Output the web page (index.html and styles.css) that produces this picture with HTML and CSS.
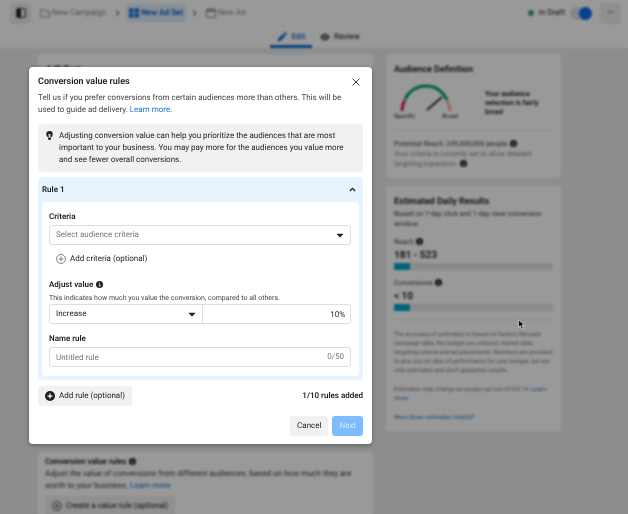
FILE: index.html
```
<!DOCTYPE html>
<html lang="en">

<head>
    <meta charset="utf-8">
    <title>Conversion value rules</title>
    <link rel="stylesheet" href="styles.css">
</head>

<body>

    <svg class="sprite" aria-hidden="true">
        <symbol id="info" viewBox="0 0 14 14">
            <circle cx="7" cy="7" r="7" fill="currentColor" />
            <path d="M5.5 6h2.3v4M5.3 10.3h3.6M7 3v1.6" stroke="#fff" stroke-width="1.6" fill="none" />
        </symbol>
        <symbol id="plus-circle" viewBox="0 0 20 20">
            <circle cx="10" cy="10" r="9" fill="none" stroke="currentColor" stroke-width="1.6" />
            <path d="M10 5v10M5 10h10" stroke="currentColor" stroke-width="1.6" />
        </symbol>
        <symbol id="chevron" viewBox="0 0 8 12">
            <path d="M2 2l4 4-4 4" fill="none" stroke="currentColor" stroke-width="2" />
        </symbol>
        <symbol id="caret" viewBox="0 0 12 8">
            <path d="M1.5 1h9q1 0 .4.8L6.8 6.4q-.8.8-1.6 0L1.1 1.8Q.5 1 1.5 1z" fill="currentColor" />
        </symbol>
    </svg>

    <div class="page">
        <header class="topbar">
            <div class="topbar-row">
                <button class="square-btn" type="button" aria-label="Toggle panel">
                    <svg class="icon" viewBox="0 0 18 18"><rect x="1" y="1" width="16" height="16" rx="3" fill="none" stroke="#333" stroke-width="2" /><path d="M2 1h7v16H2z" fill="#222" /></svg>
                </button>
                <nav class="crumbs">
                    <a class="crumb" href="#">
                        <svg class="icon" viewBox="0 0 20 18"><path d="M1 3q0-1 1-1h5l2 3h9q1 0 1 1v10q0 1-1 1H2q-1 0-1-1z" fill="none" stroke="currentColor" stroke-width="2" /></svg>
                        New Campaign
                    </a>
                    <svg class="crumb-sep"><use href="#chevron" /></svg>
                    <a class="crumb crumb-active" href="#">
                        <svg class="icon" viewBox="0 0 18 18"><path d="M0 1h8v7H0zM10 1h8v7h-8zM0 10h8v7H0zM10 10h8v7h-8z" fill="currentColor" /></svg>
                        New Ad Set
                    </a>
                    <svg class="crumb-sep"><use href="#chevron" /></svg>
                    <a class="crumb" href="#">
                        <svg class="icon" viewBox="0 0 18 18"><rect x="1" y="2" width="16" height="15" rx="2" fill="none" stroke="currentColor" stroke-width="2" /><path d="M1 4h16v3H1z" fill="currentColor" /></svg>
                        New Ad
                    </a>
                </nav>
                <div class="status">
                    <span class="status-dot"></span>
                    <label for="live">In Draft</label>
                    <input class="toggle" id="live" type="checkbox" checked>
                    <button class="square-btn" type="button" aria-label="More">•••</button>
                </div>
            </div>
            <nav class="tabs">
                <a class="tab tab-active" href="#">
                    <svg class="icon" viewBox="0 0 18 18"><path d="M1 17l1-5L11 3l4 4-9 9zM12 2l1.500-1.500q1-1 2 0l2 2q1 1 0 2L16 6z" fill="currentColor" /></svg>
                    Edit
                </a>
                <a class="tab" href="#">
                    <svg class="icon" viewBox="0 0 20 16"><path d="M0 8q10-14 20 0Q10 22 0 8z" fill="currentColor" /><circle cx="10" cy="8" r="3" fill="none" stroke="#fff" stroke-width="1.500" /></svg>
                    Review
                </a>
            </nav>
        </header>

        <main class="columns">
            <div class="column">
                <section class="card card-test">
                    <h2>A/B Test</h2>
                </section>
                <section class="card card-rules">
                    <h3>Conversion value rules <svg class="info"><use href="#info" /></svg></h3>
                    <p>Adjust the value of conversions from different audiences, based on how much they are worth to your business. <a href="#">Learn more</a></p>
                    <button class="btn btn-grey" type="button"><svg class="plus"><use href="#plus-circle" /></svg>Create a value rule (optional)</button>
                </section>
            </div>

            <aside class="column">
                <section class="card">
                    <h2>Audience Definition</h2>
                    <div class="gauge-row">
                        <div class="gauge">
                            <svg viewBox="0 0 54 30">
                                <g fill="none" stroke-width="3">
                                    <path d="M3 29q0-6 3-11" stroke="#e41e4f" />
                                    <path d="M6 17Q13 4 27 4t21 14" stroke="#00a35c" />
                                    <path d="M48 19q3 4 3 10" stroke="#ffb3a0" />
                                    <path d="M28 28l15-13" stroke="#333" stroke-width="2" />
                                </g>
                            </svg>
                            <div class="gauge-ends"><span>Specific</span><span>Broad</span></div>
                        </div>
                        <strong>Your audience selection is fairly broad</strong>
                    </div>
                    <div class="reach">
                        <p class="label">Potential Reach: 249,000,000 people <svg class="info"><use href="#info" /></svg></p>
                        <p class="faint">Your criteria is currently set to allow detailed targeting expansion. <svg class="info"><use href="#info" /></svg></p>
                    </div>
                </section>

                <section class="card card-results">
                    <h2>Estimated Daily Results</h2>
                    <p class="label">Based on 7-day click and 1-day view conversion window</p>
                    <div class="metric">
                        <p class="label">Reach <svg class="info"><use href="#info" /></svg></p>
                        <strong>181 - 523</strong>
                        <div class="bar"><span></span></div>
                    </div>
                    <div class="metric">
                        <p class="label">Conversions <svg class="info"><use href="#info" /></svg></p>
                        <strong>&lt; 10</strong>
                        <div class="bar"><span></span></div>
                    </div>
                    <div class="notes">
                        <p>The accuracy of estimates is based on factors like past campaign data, the budget you entered, market data, targeting criteria and ad placements. Numbers are provided to give you an idea of performance for your budget, but are only estimates and don't guarantee results.</p>
                        <p>Estimates may change as people opt out of iOS 14. <a href="#">Learn more</a></p>
                        <p><a href="#">Were these estimates helpful?</a></p>
                    </div>
                </section>
            </aside>
        </main>
    </div>

    <div class="overlay">
        <form class="modal" role="dialog" aria-labelledby="modal-title">
            <div class="modal-head">
                <h1 id="modal-title">Conversion value rules</h1>
                <button class="close" type="button" aria-label="Close">
                    <svg viewBox="0 0 16 16"><path d="M1 1l14 14M15 1L1 15" stroke="currentColor" stroke-width="2" /></svg>
                </button>
            </div>
            <p class="intro">Tell us if you prefer conversions from certain audiences more than others. This will be used to guide ad delivery. <a href="#">Learn more.</a></p>

            <div class="tip">
                <svg class="bulb" viewBox="0 0 14 18"><path d="M7 0a6.500 6.500 0 0 1 6.500 6.500c0 2.500-1.500 4-2.500 5.500H8.500V8L10 6.500 9 5.500 7 7.500 5 5.500 4 6.500 5.500 8v4H3C2 10.500.5 9 .5 6.500A6.500 6.500 0 0 1 7 0zM4 13h6v2q0 3-3 3t-3-3z" fill="currentColor" /></svg>
                <p>Adjusting conversion value can help you prioritize the audiences that are most important to your business. You may pay more for the audiences you value more and see fewer overall conversions.</p>
            </div>

            <section class="rule">
                <button class="rule-head" type="button" aria-expanded="true">
                    Rule 1
                    <svg viewBox="0 0 12 8"><path d="M1.500 6.500L6 2l4.500 4.500" fill="none" stroke="currentColor" stroke-width="2.200" /></svg>
                </button>
                <div class="rule-body">
                    <label for="criteria">Criteria</label>
                    <div class="field">
                        <select class="empty" id="criteria">
                            <option>Select audience criteria</option>
                        </select>
                        <svg class="caret"><use href="#caret" /></svg>
                    </div>
                    <button class="link-btn" type="button"><svg class="plus"><use href="#plus-circle" /></svg>Add criteria (optional)</button>

                    <label for="direction">Adjust value <svg class="info"><use href="#info" /></svg></label>
                    <p class="hint">This indicates how much you value the conversion, compared to all others.</p>
                    <div class="field split">
                        <div class="split-part">
                            <select id="direction">
                                <option>Increase</option>
                                <option>Decrease</option>
                            </select>
                            <svg class="caret"><use href="#caret" /></svg>
                        </div>
                        <input class="amount" type="text" value="10%" aria-label="Amount">
                    </div>

                    <label for="name">Name rule</label>
                    <div class="field">
                        <input id="name" type="text" placeholder="Untitled rule">
                        <span class="count">0/50</span>
                    </div>
                </div>
            </section>

            <div class="add-row">
                <button class="btn btn-grey" type="button">
                    <svg class="plus" viewBox="0 0 20 20"><circle cx="10" cy="10" r="10" fill="currentColor" /><path d="M10 5v10M5 10h10" stroke="#fff" stroke-width="2.500" /></svg>
                    Add rule (optional)
                </button>
                <strong>1/10 rules added</strong>
            </div>
            <div class="actions">
                <button class="btn btn-grey" type="button">Cancel</button>
                <button class="btn btn-blue" type="submit" disabled>Next</button>
            </div>
        </form>
        <svg class="pointer" viewBox="0 0 12 18"><path d="M1 1v13l3-3 2.500 5.500 2.500-1L6.500 10H11z" fill="#000" stroke="#fff" /></svg>
    </div>

</body>

</html>
```
FILE: styles.css
```
* {
    box-sizing: border-box;
}

body {
    margin: 0;
    height: 100vh;
    overflow: hidden;
    background: #e9ebed;
    color: #1c1e21;
    font-family: Roboto, sans-serif;
    font-size: 8px;
    line-height: 12px;
    text-rendering: geometricPrecision;
}

h1, h2, h3, p {
    margin: 0;
}

h1, h2 {
    font-size: 9px;
    font-weight: 600;
}

h3 {
    font-size: 8px;
    font-weight: 600;
}

a {
    color: #1877d2;
    text-decoration: none;
}

button, input, select {
    font: inherit;
    color: inherit;
    text-rendering: inherit;
}

button {
    border: 0;
    cursor: pointer;
}

strong {
    font-weight: 600;
}

.sprite {
    display: none;
}

.icon {
    width: 10px;
    height: 10px;
}

.info {
    width: 7px;
    height: 7px;
    margin-left: 1px;
    vertical-align: -1px;
}

.plus {
    width: 10px;
    height: 10px;
}

/* page behind the dialog */
.topbar {
    height: 48px;
    padding: 2px 7px 0 10px;
    background: #fff;
}

.topbar-row, .crumbs, .crumb, .status, .tabs, .tab {
    display: flex;
    align-items: center;
}

.topbar-row {
    height: 22px;
    gap: 6px;
}

.square-btn {
    display: flex;
    align-items: center;
    justify-content: center;
    width: 21px;
    height: 21px;
    padding: 0;
    border-radius: 3px;
    background: #eceef1;
    font-size: 6px;
}

.crumbs {
    flex: 1;
    gap: 6px;
}

.crumb {
    gap: 2px;
    padding: 3px;
    border-radius: 3px;
    color: #8a8d91;
}

.crumb-active {
    background: #e0edfb;
    color: #0a6fd8;
    font-weight: 700;
}

.crumb-sep {
    width: 5px;
    height: 8px;
    color: #777;
}

.status {
    gap: 5px;
}

.status-dot {
    width: 6px;
    height: 6px;
    border-radius: 50%;
    background: #31a86b;
}

.toggle {
    display: flex;
    justify-content: flex-end;
    appearance: none;
    width: 22px;
    height: 13px;
    margin: 0 3px 0 0;
    border-radius: 7px;
    background: #d6dfee;
}

.toggle::before {
    content: "";
    width: 13px;
    height: 13px;
    border-radius: 50%;
    background: #0a6fe8;
}

.tabs {
    justify-content: center;
    gap: 1px;
    padding-left: 6px;
}

.tab {
    gap: 4px;
    height: 24px;
    padding: 4px 7px 0;
    border-bottom: 3px solid transparent;
    color: #444;
    font-weight: 500;
}

.tab-active {
    border-color: #0a6fd8;
    color: #0a6fd8;
}

.columns {
    display: grid;
    grid-template-columns: 67fr 35fr;
    gap: 13px;
    padding: 6px 67px 0 38px;
}

.column {
    display: flex;
    flex-direction: column;
    gap: 8px;
    min-width: 0;
}

.card {
    padding: 10px 8px 9px;
    border-radius: 3px;
    background: #fff;
}

.card-test {
    min-height: 390px;
}

.card-rules {
    padding: 4px 7px;
}

.card-rules p {
    margin-bottom: 4px;
    color: #444;
}

.gauge-row {
    display: flex;
    justify-content: space-between;
    margin-top: 6px;
    padding-bottom: 9px;
    border-bottom: 1px solid #e4e6e9;
    font-size: 7px;
    line-height: 9px;
}

.gauge-row strong {
    width: 68px;
    padding-top: 8px;
}

.gauge {
    width: 64px;
}

.gauge svg {
    display: block;
    width: 54px;
    height: 30px;
    margin: 0 auto;
}

.gauge-ends {
    display: flex;
    justify-content: space-between;
    font-size: 6px;
}

.reach {
    padding-top: 8px;
}

.label {
    color: #444;
    font-size: 7px;
    line-height: 10px;
}

.faint {
    color: #8a8d91;
    font-size: 7px;
    line-height: 10px;
}

.label .info, .faint .info {
    color: #1c1e21;
}

.card-results .label {
    margin-top: 1px;
}

.metric {
    margin-top: 8px;
}

.metric strong {
    display: block;
    margin: 3px 0 1px;
    font-size: 10px;
}

.bar {
    height: 7px;
    border-radius: 1px;
    background: #e2e4e8;
}

.bar span {
    display: block;
    width: 10%;
    height: 100%;
    border-radius: 1px;
    background: #00a9c7;
}

.notes {
    margin-top: 8px;
    padding-top: 10px;
    border-top: 1px solid #e4e6e9;
    color: #777;
    font-size: 6px;
    line-height: 9px;
}

.notes p {
    margin-bottom: 10px;
}

.notes p:last-child {
    margin: 0;
}

/* dialog */
.overlay {
    position: fixed;
    inset: 0;
    padding: 67px 29px;
    background: rgba(0, 0, 0, 0.4);
    backdrop-filter: blur(1px);
}

.modal {
    width: 100%;
    max-width: 343px;
    padding: 8px 9px;
    border-radius: 4px;
    background: #fff;
    box-shadow: 0 1px 4px rgba(0, 0, 0, 0.4);
}

.modal-head {
    display: flex;
    align-items: center;
    justify-content: space-between;
    margin-bottom: 3px;
}

.close {
    display: flex;
    padding: 3px;
    background: none;
    color: #444;
}

.close svg {
    width: 8px;
    height: 8px;
}

.intro {
    padding-right: 16px;
    color: #444;
}

.tip {
    display: flex;
    gap: 6px;
    margin: 8px 0 5px;
    padding: 6px 8px;
    border-radius: 4px;
    background: #f1f1f1;
}

.bulb {
    flex: none;
    width: 7px;
    height: 9px;
    margin-top: 1px;
}

.rule {
    padding: 0 4px 4px;
    border-radius: 4px;
    background: #e7f4ff;
}

.rule-head {
    display: flex;
    align-items: center;
    justify-content: space-between;
    width: 100%;
    height: 25px;
    padding: 0 3px 0 0;
    background: none;
    font-weight: 600;
}

.rule-head svg {
    width: 7px;
    height: 5px;
}

.rule-body {
    padding: 9px 8px 9px 7px;
    border-radius: 4px;
    background: #fff;
}

.rule-body label {
    display: block;
    margin-bottom: 2px;
    font-weight: 600;
}

.field {
    display: flex;
    align-items: center;
    height: 20px;
    padding-right: 6px;
    border: 1px solid #dcdee2;
    border-radius: 3px;
}

.field select, .field input {
    flex: 1;
    min-width: 0;
    height: 100%;
    padding: 0 6px;
    border: 0;
    outline: 0;
    appearance: none;
    background: none;
}

.field .empty, .count {
    color: #777;
}

.field input::placeholder {
    color: #777;
}

.caret {
    width: 8px;
    height: 5px;
    pointer-events: none;
}

.link-btn {
    display: flex;
    align-items: center;
    gap: 4px;
    margin: 8px 0 14px;
    padding: 0 7px;
    background: none;
}

.link-btn .plus {
    color: #666;
}

.rule-body .hint {
    color: #444;
    font-size: 7px;
    line-height: 11px;
}

.split {
    margin-bottom: 9px;
    padding-right: 0;
}

.split-part {
    display: flex;
    flex: none;
    align-items: center;
    width: 51%;
    height: 100%;
    padding-right: 6px;
    border-right: 1px solid #dcdee2;
}

.field .amount {
    padding: 0 5px;
    text-align: right;
}

.add-row {
    display: flex;
    align-items: center;
    justify-content: space-between;
    margin-top: 6px;
}

.btn {
    display: inline-flex;
    align-items: center;
    gap: 4px;
    height: 20px;
    padding: 0 7px;
    border-radius: 3px;
}

.btn-grey {
    background: #f1f1f1;
}

.btn-blue {
    background: #7fbcff;
    color: #d5e9ff;
}

.actions {
    display: flex;
    justify-content: flex-end;
    gap: 4px;
    margin-top: 10px;
}

.pointer {
    position: absolute;
    left: 518px;
    top: 319px;
    width: 7px;
    height: 11px;
}
```
